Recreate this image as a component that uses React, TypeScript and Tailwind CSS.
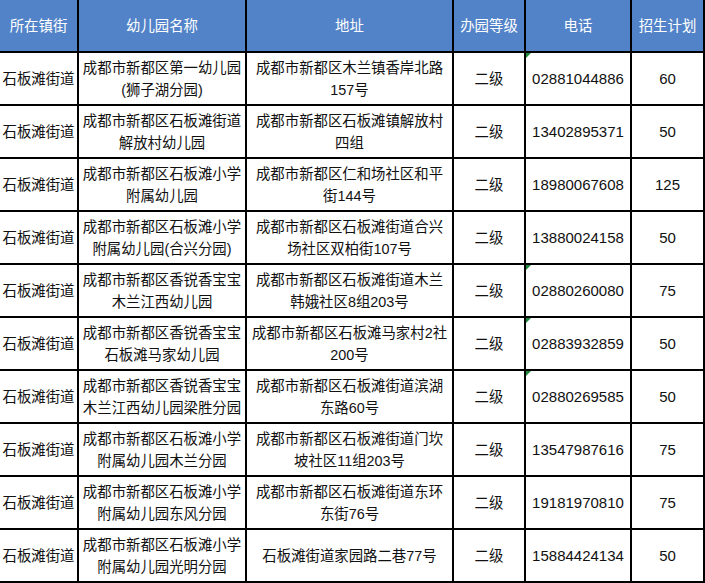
const headers = ["所在镇街", "幼儿园名称", "地址", "办园等级", "电话", "招生计划"];

const widths = ["w-[79px]", "w-[168px]", "w-[207px]", "w-[72px]", "w-[106px]", "w-[73px]"];

type Row = {
  name: string[];
  addr: string[];
  phone: string;
  plan: string;
};

const rows: Row[] = [
  { name: ["成都市新都区第一幼儿园", "(狮子湖分园)"], addr: ["成都市新都区木兰镇香岸北路", "157号"], phone: "02881044886", plan: "60" },
  { name: ["成都市新都区石板滩街道", "解放村幼儿园"], addr: ["成都市新都区石板滩镇解放村", "四组"], phone: "13402895371", plan: "50" },
  { name: ["成都市新都区石板滩小学", "附属幼儿园"], addr: ["成都市新都区仁和场社区和平", "街144号"], phone: "18980067608", plan: "125" },
  { name: ["成都市新都区石板滩小学", "附属幼儿园(合兴分园)"], addr: ["成都市新都区石板滩街道合兴", "场社区双柏街107号"], phone: "13880024158", plan: "50" },
  { name: ["成都市新都区香锐香宝宝", "木兰江西幼儿园"], addr: ["成都市新都区石板滩街道木兰", "韩娥社区8组203号"], phone: "02880260080", plan: "75" },
  { name: ["成都市新都区香锐香宝宝", "石板滩马家幼儿园"], addr: ["成都市新都区石板滩马家村2社", "200号"], phone: "02883932859", plan: "50" },
  { name: ["成都市新都区香锐香宝宝", "木兰江西幼儿园梁胜分园"], addr: ["成都市新都区石板滩街道滨湖", "东路60号"], phone: "02880269585", plan: "50" },
  { name: ["成都市新都区石板滩小学", "附属幼儿园木兰分园"], addr: ["成都市新都区石板滩街道门坎", "坡社区11组203号"], phone: "13547987616", plan: "75" },
  { name: ["成都市新都区石板滩小学", "附属幼儿园东风分园"], addr: ["成都市新都区石板滩街道东环", "东街76号"], phone: "19181970810", plan: "75" },
  { name: ["成都市新都区石板滩小学", "附属幼儿园光明分园"], addr: ["石板滩街道家园路二巷77号"], phone: "15884424134", plan: "50" },
];

function Cell({ col, children, className = "" }: { col: number; children: React.ReactNode; className?: string }) {
  return (
    <div
      className={`relative flex shrink-0 flex-col items-center justify-center border-b-2 border-r-2 border-black text-center ${widths[col]} ${className}`}
    >
      {children}
    </div>
  );
}

function Lines({ lines }: { lines: string[] }) {
  return (
    <>
      {lines.map((line) => (
        <span key={line} className="whitespace-nowrap">
          {line}
        </span>
      ))}
    </>
  );
}

export default function App() {
  return (
    <div className="w-[705px] overflow-hidden bg-white text-[14.4px] leading-[22px] text-[#111] [font-family:'Liberation_Sans','Noto_Sans_CJK_SC',sans-serif]">
      <div className="flex h-[53px]">
        {headers.map((h, i) => (
          <Cell key={h} col={i} className="bg-[#5283c8] text-white">
            {h}
          </Cell>
        ))}
      </div>
      {rows.map((row) => (
        <div key={row.phone} className="flex h-[53px]">
          <Cell col={0}>石板滩街道</Cell>
          <Cell col={1}>
            <Lines lines={row.name} />
          </Cell>
          <Cell col={2}>
            <Lines lines={row.addr} />
          </Cell>
          <Cell col={3}>二级</Cell>
          <Cell col={4} className="text-[15px]">
            {row.phone.startsWith("0") && (
              <span className="absolute left-0 top-0 h-0 w-0 border-r-[5px] border-t-[5px] border-r-transparent border-t-[#1f8a3a]" />
            )}
            {row.phone}
          </Cell>
          <Cell col={5} className="text-[15px]">
            {row.plan}
          </Cell>
        </div>
      ))}
    </div>
  );
}
